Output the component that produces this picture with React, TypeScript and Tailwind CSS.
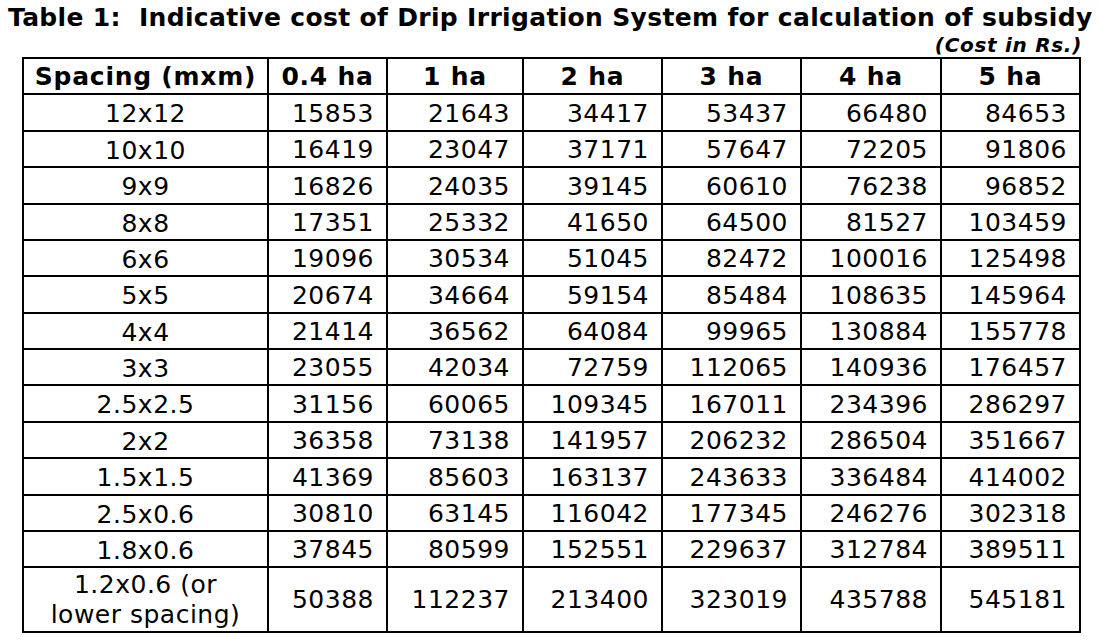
const heads = ["Spacing (mxm)", "0.4 ha", "1 ha", "2 ha", "3 ha", "4 ha", "5 ha"];

const rows: [string, number[]][] = [
  ["12x12", [15853, 21643, 34417, 53437, 66480, 84653]],
  ["10x10", [16419, 23047, 37171, 57647, 72205, 91806]],
  ["9x9", [16826, 24035, 39145, 60610, 76238, 96852]],
  ["8x8", [17351, 25332, 41650, 64500, 81527, 103459]],
  ["6x6", [19096, 30534, 51045, 82472, 100016, 125498]],
  ["5x5", [20674, 34664, 59154, 85484, 108635, 145964]],
  ["4x4", [21414, 36562, 64084, 99965, 130884, 155778]],
  ["3x3", [23055, 42034, 72759, 112065, 140936, 176457]],
  ["2.5x2.5", [31156, 60065, 109345, 167011, 234396, 286297]],
  ["2x2", [36358, 73138, 141957, 206232, 286504, 351667]],
  ["1.5x1.5", [41369, 85603, 163137, 243633, 336484, 414002]],
  ["2.5x0.6", [30810, 63145, 116042, 177345, 246276, 302318]],
  ["1.8x0.6", [37845, 80599, 152551, 229637, 312784, 389511]],
];

// row heights so the lines land on the same pixels as the scan
const rowH = [
  "h-[37px]", "h-[36px]", "h-[37px]", "h-[36px]", "h-[36px]", "h-[37px]", "h-[36px]",
  "h-[36px]", "h-[37px]", "h-[36px]", "h-[37px]", "h-[36px]", "h-[36px]",
];

const cell = "border-r-2 border-b-2 border-black flex items-center";

export default function App() {
  return (
    <div className="w-[1100px] h-[642px] bg-white text-black overflow-hidden" style={{ fontFamily: '"DejaVu Sans", Verdana, sans-serif' }}>
      <h1 className="pl-[8px] pt-[3px] text-[25px] leading-[30px] font-bold tracking-[0.33px] whitespace-pre">
        Table 1:  Indicative cost of Drip Irrigation System for calculation of subsidy
      </h1>
      <div className="flex justify-end pr-[18px] h-[24px] text-[20px] leading-[24px] font-bold italic tracking-[0.7px]">(Cost in Rs.)</div>

      <div className="ml-[22px] w-[1059px] border-l-2 border-t-2 border-black grid grid-cols-[245px_119px_136px_139px_139px_140px_139px] text-[25px] tracking-[0.5px]">
        {heads.map((h) => (
          <div key={h} className={`${cell} h-[36px] justify-center font-bold tracking-[0.75px] pt-[1px]`}>
            {h}
          </div>
        ))}

        {rows.map(([sp, vals], i) => (
          <div key={sp} className="contents">
            <div className={`${cell} ${rowH[i]} justify-center pt-[3px]`}>{sp}</div>
            {vals.map((v, j) => (
              <div key={j} className={`${cell} ${rowH[i]} justify-end pr-[12px] pt-[2px]`}>
                {v}
              </div>
            ))}
          </div>
        ))}

        <div className={`${cell} h-[65px] flex-col justify-center text-center leading-[30px]`}>
          <span>1.2x0.6 (or</span>
          <span>lower spacing)</span>
        </div>
        {[50388, 112237, 213400, 323019, 435788, 545181].map((v) => (
          <div key={v} className={`${cell} h-[65px] justify-end pr-[12px]`}>
            {v}
          </div>
        ))}
      </div>
    </div>
  );
}
